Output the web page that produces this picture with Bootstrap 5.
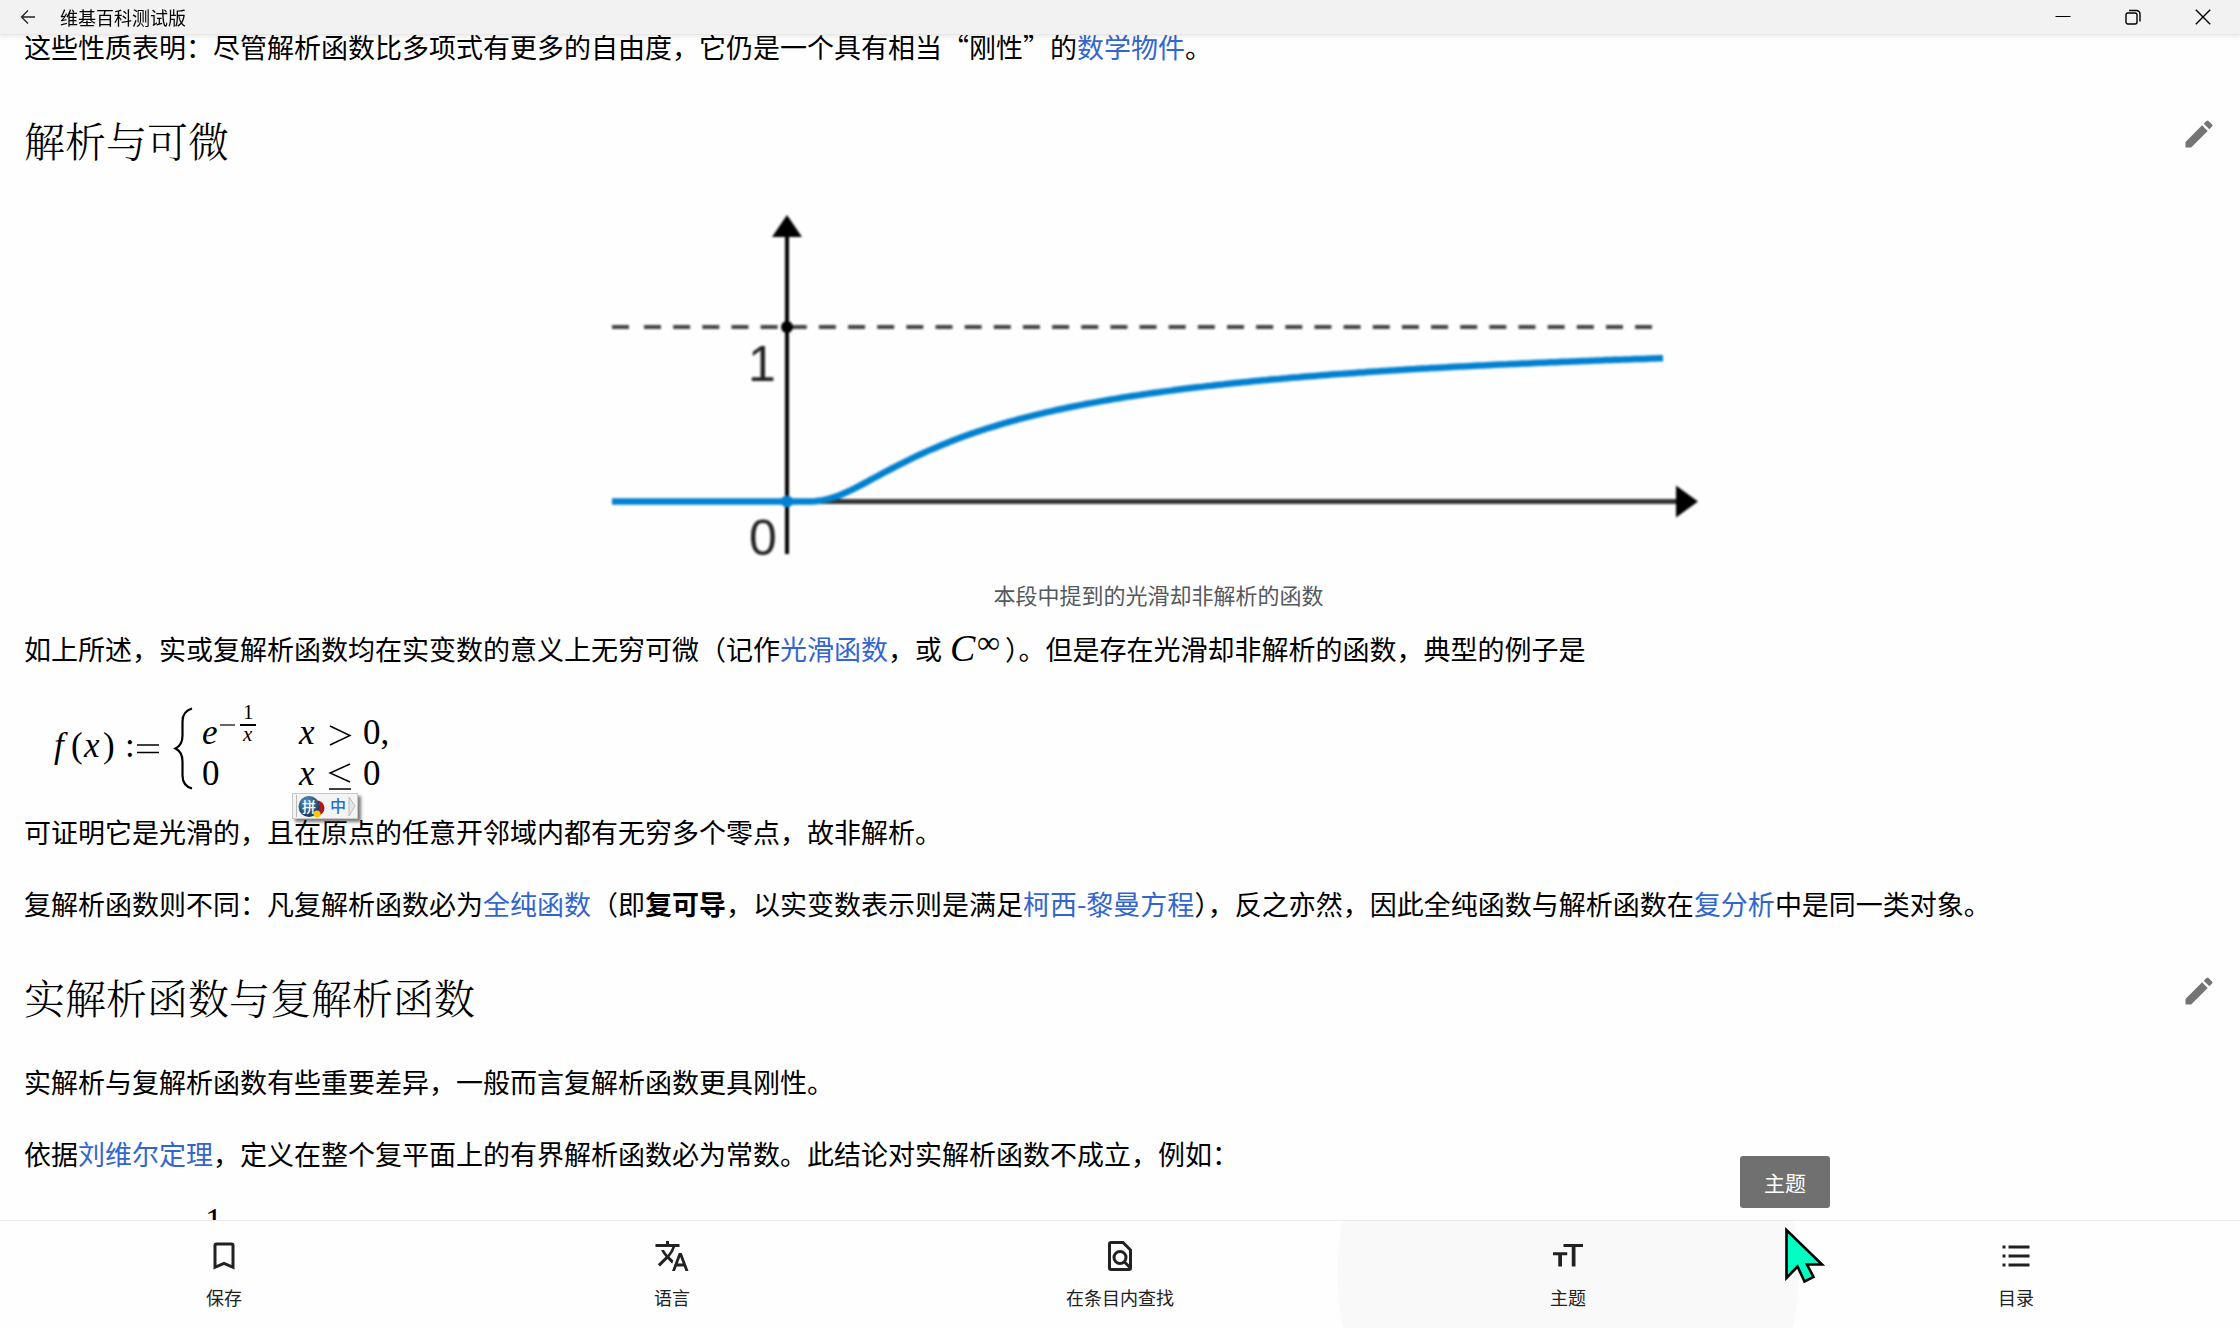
<!DOCTYPE html>
<html lang="zh-CN">
<head>
<meta charset="utf-8">
<meta name="viewport" content="width=device-width, initial-scale=1">
<title>维基百科测试版</title>
<link rel="stylesheet" href="https://cdn.jsdelivr.net/npm/bootstrap@5.3.0/dist/css/bootstrap.min.css">
<style>
  body { font-family: "Noto Sans CJK SC", sans-serif; color: #000; background: #fefefe; }
  svg { display: block; flex: none; }
  .titlebar { height: 35px; padding-right: 2px; background: #f2f2f2; border-bottom: 1px solid #e8e8e8; box-shadow: 0 2px 4px #00000014; }
  .titlebar .btn { height: 34px; color: #000; }
  .back-btn { width: 60px; }
  .win-btn { width: 70px; }
  .app-title { font-size: 18px; line-height: 34px; }
  .article { padding: 27px 23px 0 24px; height: 100vh; overflow: hidden; }
  .article p { font-size: 27px; line-height: 40px; margin: 0 0 32px; }
  .article p.before-math { margin-bottom: 26px; }
  .article a { color: #3366cc; text-decoration: none; }
  .section-head { margin: 49px 0 41px; }
  .section-head h2 { font-family: "Noto Serif CJK SC", "Noto Sans CJK SC", serif; font-weight: 300; font-size: 41px; line-height: 48px; margin: 0; }
  .plot { padding-left: 76px; margin: 0 0 15px; }
  .plot svg { width: 1112px; max-width: 100%; }
  .plot .curve-art { filter: blur(1px); }
  .plot figcaption { font-size: 22px; line-height: 40px; margin-top: 9px; color: #54595d; }
  .math text { font-family: "Liberation Serif", serif; font-size: 35px; }
  .math .it { font-style: italic; }
  .math .sm { font-size: 21px; }
  .block-math { margin-bottom: 6px; }
  .inline-math { display: inline-block; vertical-align: -10px; margin: 0 2px 0 4px; }
  .inline-math text { font-size: 38px; }
  .inline-math .sup { font-size: 32px; }
  .bottombar { height: 108px; background: #fefefe; border-top: 1px solid #eaecf0; }
  .tab-btn { flex: 1 1 0; padding-top: 17px; color: #202122; font-size: 18px; line-height: 24px; gap: 11px; }
  .tab-btn.hovered::before { content: ""; position: absolute; left: 50%; top: 50%; width: 462px; height: 462px; margin: -231px 0 0 -231px; border-radius: 50%; background: #f9f9f9; }
  .tab-btn svg, .tab-btn span { position: relative; }
  .tip { position: fixed; right: 410px; bottom: 120px; width: 90px; height: 52px; z-index: 1050; background: #707070; color: #fff; font-size: 21px; line-height: 52px; text-align: center; border-radius: 3px; }
  .pointer { position: fixed; right: 414px; bottom: 42px; z-index: 1060; }
  .ime { position: absolute; left: 292px; top: 793px; z-index: 10; width: 66px; height: 26px; background: #f4f4f4; border: 1px solid #c9c9c9; box-shadow: 3px 3px 3px #00000080; }
  .ime text { font-family: "Noto Sans CJK SC", sans-serif; font-weight: 500; }
</style>
<script src="https://cdn.jsdelivr.net/npm/bootstrap@5.3.0/dist/js/bootstrap.bundle.min.js"></script>
</head>
<body>
<header class="titlebar fixed-top d-flex align-items-center">
  <button class="btn back-btn border-0 rounded-0 p-0 d-flex align-items-center justify-content-center pe-1" aria-label="返回">
    <svg width="16" height="16" viewBox="0 0 16 16" fill="none" stroke="#222" stroke-width="1.3"><path d="M15 8H1.5M8 1.500 1.500 8 8 14.500"/></svg>
  </button>
  <span class="app-title me-auto">维基百科测试版</span>
  <button class="btn win-btn border-0 rounded-0 p-0 d-flex align-items-center justify-content-center" aria-label="最小化"><svg width="16" height="16" viewBox="0 0 16 16" stroke="#000" stroke-width="1"><path d="M.5 7.500h15"/></svg></button>
  <button class="btn win-btn border-0 rounded-0 p-0 d-flex align-items-center justify-content-center" aria-label="还原"><svg width="16" height="16" viewBox="0 0 16 16" fill="none" stroke="#000" stroke-width="1.400"><rect x="1" y="4" width="11" height="11" rx="2"/><path d="M4 1.500h7.500a3.500 3.500 0 0 1 3.500 3.500v7.500"/></svg></button>
  <button class="btn win-btn border-0 rounded-0 p-0 d-flex align-items-center justify-content-center" aria-label="关闭"><svg width="16" height="16" viewBox="0 0 16 16" stroke="#000" stroke-width="1.400"><path d="M.8.8l14.400 14.400M15.200.8.8 15.200"/></svg></button>
</header>

<main class="article">
  <p>这些性质表明：尽管解析函数比多项式有更多的自由度，它仍是一个具有相当“刚性”的<a href="#">数学物件</a>。</p>

  <div class="section-head d-flex justify-content-between align-items-start">
    <h2>解析与可微</h2>
    <button class="btn border-0 p-0" aria-label="编辑"><svg width="36" height="36" viewBox="0 0 24 24" fill="#747474"><path d="M3 17.250V21h3.750L17.810 9.940l-3.750-3.750L3 17.250zM20.710 7.040a1 1 0 0 0 0-1.410l-2.340-2.340a1 1 0 0 0-1.410 0l-1.830 1.830 3.750 3.750 1.830-1.830z"/></svg></button>
  </div>

  <figure class="plot d-flex flex-column align-items-center">
    <svg viewBox="603 205 1112 360" role="img" aria-label="光滑却非解析的函数图像">
      <g class="curve-art">
        <path d="M612 327h19M644 327H1652" stroke="#444" stroke-width="4" fill="none" stroke-dasharray="17 12.150"/>
        <path d="M787 235V554" stroke="#000" stroke-width="4"/>
        <path d="M787 501.500H1678" stroke="#333" stroke-width="5"/>
        <path d="M787 215l15 22h-30zM1698 501.500l-22 16v-32z" fill="#000"/>
        <circle cx="787" cy="327" r="6"/>
        <circle cx="787" cy="501.500" r="6" fill="#0080d0"/>
        <path id="curve" fill="none" stroke="#0080d0" stroke-width="6.500" stroke-linejoin="round"/>
        <text x="748" y="381" font-family="Liberation Sans" font-size="50" fill="#222">1</text>
        <text x="749" y="555" font-family="Liberation Sans" font-size="50" fill="#222">0</text>
      </g>
    </svg>
    <figcaption>本段中提到的光滑却非解析的函数</figcaption>
  </figure>

  <p class="before-math">如上所述，实或复解析函数均在实变数的意义上无穷可微（记作<a href="#">光滑函数</a>，或<svg class="math inline-math" width="57" height="40" viewBox="946 630 57 40" role="img" aria-label="C 无穷"><text class="it" x="950" y="661">C</text><text class="sup" x="977" y="653">∞</text></svg>）。但是存在光滑却非解析的函数，典型的例子是</p>

  <svg class="math block-math" width="376" height="110" viewBox="24 695 376 110" role="img" aria-label="分段函数 f(x)">
    <text class="it" x="54" y="756">f</text><text x="71" y="756">(</text><text class="it" x="84" y="756">x</text><text x="103" y="756">)</text>
    <text x="125" y="756">:</text><path d="M137 744h22M137 751.500h22" stroke="#000" stroke-width="1.300"/>
    <path d="M192 707.500c-7 2-9.500 6-9.500 13v14c0 7-2 10.500-7 13 5 2.500 7 6 7 13v14c0 7 2.500 11 9.500 13" fill="none" stroke="#000" stroke-width="2.200"/>
    <text class="it" x="202" y="743">e</text><path d="M220 724h15" stroke="#000" stroke-width="1.200"/>
    <text class="sm" x="243" y="718">1</text><path d="M240 724h16" stroke="#000" stroke-width="2"/><text class="sm it" x="243" y="740">x</text>
    <text x="202" y="784">0</text>
    <text class="it" x="299" y="743">x</text><path d="M330 725l20 9.500-20 9.500" fill="none" stroke="#000" stroke-width="1.400"/><text x="363" y="743">0,</text>
    <text class="it" x="299" y="784">x</text><path d="M350 763l-20 9 20 9M329 788h22" fill="none" stroke="#000" stroke-width="1.400"/><text x="363" y="784">0</text>
  </svg>

  <p>可证明它是光滑的，且在原点的任意开邻域内都有无穷多个零点，故非解析。</p>
  <p>复解析函数则不同：凡复解析函数必为<a href="#">全纯函数</a>（即<b>复可导</b>，以实变数表示则是满足<a href="#">柯西-黎曼方程</a>），反之亦然，因此全纯函数与解析函数在<a href="#">复分析</a>中是同一类对象。</p>

  <div class="section-head d-flex justify-content-between align-items-start">
    <h2>实解析函数与复解析函数</h2>
    <button class="btn border-0 p-0" aria-label="编辑"><svg width="36" height="36" viewBox="0 0 24 24" fill="#747474"><path d="M3 17.250V21h3.750L17.810 9.940l-3.750-3.750L3 17.250zM20.710 7.040a1 1 0 0 0 0-1.410l-2.340-2.340a1 1 0 0 0-1.410 0l-1.830 1.830 3.750 3.750 1.830-1.830z"/></svg></button>
  </div>

  <p>实解析与复解析函数有些重要差异，一般而言复解析函数更具刚性。</p>
  <p>依据<a href="#">刘维尔定理</a>，定义在整个复平面上的有界解析函数必为常数。此结论对实解析函数不成立，例如：</p>
  <svg class="math" width="376" height="90" viewBox="24 1203 376 90" role="img" aria-label="实解析函数示例"><text x="205" y="1230">1</text></svg>
</main>

<div class="ime" aria-label="输入法">
  <svg width="64" height="24" viewBox="293 794 64 24">
    <defs><radialGradient id="ball" cx=".4" cy=".3" r=".8"><stop offset="0" stop-color="#5b95c4"/><stop offset="1" stop-color="#0b2a4c"/></radialGradient></defs>
    <path d="M296.500 795v22" stroke="#bbb"/>
    <circle cx="317" cy="808" r="7.500" fill="#b3151d"/><circle cx="309" cy="806.500" r="10.500" fill="url(#ball)"/>
    <text x="302" y="812" font-size="14" fill="#fff">拼</text>
    <circle cx="317" cy="814" r="3.500" fill="#ffc40d"/>
    <text x="330" y="812" font-size="16" fill="#1f6fe0">中</text>
    <path d="M349 797l6 9-6 10z" fill="#e6e6e6" stroke="#bbb"/>
  </svg>
</div>

<nav class="bottombar fixed-bottom d-flex overflow-hidden">
  <button class="tab-btn btn border-0 rounded-0 px-0 pb-0 d-flex flex-column align-items-center"><svg width="36" height="36" viewBox="0 0 24 24" fill="#202122"><path d="M17 3H7a2 2 0 0 0-2 2v16l7-3 7 3V5a2 2 0 0 0-2-2zm0 15-5-2.180L7 18V5h10v13z"/></svg><span>保存</span></button>
  <button class="tab-btn btn border-0 rounded-0 px-0 pb-0 d-flex flex-column align-items-center"><svg width="36" height="36" viewBox="0 0 24 24" fill="#202122"><path d="m12.870 15.070-2.540-2.510.03-.03A17.520 17.520 0 0 0 14.070 6H17V4h-7V2H8v2H1v1.990h11.170C11.500 7.920 10.440 9.750 9 11.350 8.070 10.320 7.300 9.190 6.690 8h-2c.73 1.630 1.730 3.170 2.980 4.560l-5.090 5.020L4 19l5-5 3.110 3.110.76-2.040zM18.500 10h-2L12 22h2l1.120-3h4.750L21 22h2l-4.500-12zm-2.620 7 1.620-4.330L19.120 17h-3.240z"/></svg><span>语言</span></button>
  <button class="tab-btn btn border-0 rounded-0 px-0 pb-0 d-flex flex-column align-items-center"><svg width="36" height="36" viewBox="0 0 24 24" fill="none" stroke="#202122" stroke-width="2"><path d="M14 3H6a1 1 0 0 0-1 1v16a1 1 0 0 0 1 1h12a1 1 0 0 0 1-1V8z"/><circle cx="12" cy="13" r="4"/><path d="M15 16l4 4"/></svg><span>在条目内查找</span></button>
  <button class="tab-btn hovered btn border-0 rounded-0 px-0 pb-0 d-flex flex-column align-items-center position-relative"><svg width="36" height="36" viewBox="0 0 24 24" fill="#202122"><path d="M9 4v2h5.500v13H17V6h5V4zM2 9.500v2h3.500V19H8v-7.500h3.500v-2z"/></svg><span>主题</span></button>
  <button class="tab-btn btn border-0 rounded-0 px-0 pb-0 d-flex flex-column align-items-center position-relative"><svg width="36" height="36" viewBox="0 0 24 24" fill="#202122"><path d="M3 5h2v2H3zM7 5h14v2H7zM3 11h2v2H3zM7 11h14v2H7zM3 17h2v2H3zM7 17h14v2H7z"/></svg><span>目录</span></button>
</nav>

<div class="tip" role="tooltip">主题</div>
<svg class="pointer" width="42" height="60" viewBox="1784 1226 42 60" aria-hidden="true"><path d="M1786.500 1230v48l11-11.500 7 15 9-4.500-6.500-12.500h15z" fill="#00ffc3" stroke="#000" stroke-width="2.600"/></svg>

<script>
  // y = exp(-1/x) for x > 0 and 0 otherwise; one unit is 175 drawing units on both axes
  let d = 'M612 501.500H787';
  for (let x = 4; x <= 876; x += 4) d += ' L' + (787 + x) + ' ' + (501.5 - 175 * Math.exp(-175 / x)).toFixed(1);
  document.getElementById('curve').setAttribute('d', d);
</script>
</body>
</html>
